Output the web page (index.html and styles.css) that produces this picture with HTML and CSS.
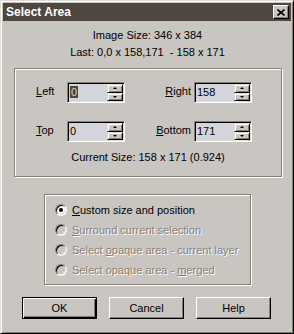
FILE: index.html
```html
<!DOCTYPE html>
<html lang="en">
<head>
  <meta charset="UTF-8">
  <title>Select Area</title>
  <link rel="stylesheet" href="styles.css">
</head>
<body>
  <div class="window">
    <div class="titlebar">
      <span class="title">Select Area</span>
      <button class="close">
        <svg width="8" height="7" viewBox="0 0 8 7"><path d="M0.5 0.5 L7.5 6.5 M7.5 0.5 L0.5 6.5" stroke="#000" stroke-width="1.6"/></svg>
      </button>
    </div>

    <div class="content">
      <p class="info">Image Size: 346 x 384</p>
      <p class="info info-last">Last: 0,0 x 158,171&nbsp; - 158 x 171</p>

      <div class="group coords">
        <div class="fields">
          <label class="lbl"><u>L</u>eft</label>
          <div class="spin">
            <span class="spin-value"><span class="sel">0</span></span>
            <span class="spin-btns"><span class="spin-btn up"><i></i></span><span class="spin-btn down"><i></i></span></span>
          </div>
          <label class="lbl lbl-right"><u>R</u>ight</label>
          <div class="spin">
            <span class="spin-value">158</span>
            <span class="spin-btns"><span class="spin-btn up"><i></i></span><span class="spin-btn down"><i></i></span></span>
          </div>

          <label class="lbl"><u>T</u>op</label>
          <div class="spin">
            <span class="spin-value">0</span>
            <span class="spin-btns"><span class="spin-btn up"><i></i></span><span class="spin-btn down"><i></i></span></span>
          </div>
          <label class="lbl lbl-right"><u>B</u>ottom</label>
          <div class="spin">
            <span class="spin-value">171</span>
            <span class="spin-btns"><span class="spin-btn up"><i></i></span><span class="spin-btn down"><i></i></span></span>
          </div>
        </div>
        <p class="info info-size">Current Size: 158 x 171 (0.924)</p>
      </div>

      <div class="group mode">
        <div class="radio"><span class="dot checked"></span><span><u>C</u>ustom size and position</span></div>
        <div class="radio disabled"><span class="dot"></span><span><u>S</u>urround current selection</span></div>
        <div class="radio disabled"><span class="dot"></span><span>Select <u>o</u>paque area - current layer</span></div>
        <div class="radio disabled"><span class="dot"></span><span>Select opaque area - <u>m</u>erged</span></div>
      </div>

      <div class="buttons">
        <button class="btn btn-default">OK</button>
        <button class="btn">Cancel</button>
        <button class="btn">Help</button>
      </div>
    </div>
  </div>
</body>
</html>
```

FILE: styles.css
```css
body {
  margin: 0;
  background-color: #c9c5c0;
  font-family: "Liberation Sans", Arial, sans-serif;
  font-size: 11px;
  color: #000;
}

.window {
  width: 294px;
  height: 334px;
  box-sizing: border-box;
  padding: 1px;
  background-color: #c9c5c0;
  border: 1px solid;
  border-color: #e0dcd7 #000 #000 #e0dcd7;
  box-shadow: inset 1px 1px #fff, inset -1px -1px #857f78;
}

.titlebar {
  height: 18px;
  margin: 1px 0 0 1px;
  width: 288px;
  background-color: #4f463f;
  display: flex;
  align-items: center;
  justify-content: space-between;
}

.title {
  color: #fff;
  font-weight: bold;
  font-size: 12px;
  padding-left: 3px;
}

.close {
  width: 16px;
  height: 14px;
  margin-right: 2px;
  padding: 0;
  display: flex;
  align-items: center;
  justify-content: center;
  background-color: #c9c5c0;
  border: 1px solid;
  border-color: #fff #000 #000 #fff;
  box-shadow: inset -1px -1px #857f78;
}

.content {
  padding-left: 1px;
}

.info {
  margin: 8px 0 0;
  line-height: 13px;
  text-align: center;
}

.info-last {
  margin-top: 4px;
}

.group {
  border: 1px solid #857f78;
  box-shadow: 1px 1px #fff, inset 1px 1px #fff;
}

.coords {
  margin: 9px 10px 0 11px;
  height: 109px;
  box-sizing: border-box;
  padding: 13px 0 0 21px;
}

.fields {
  display: grid;
  grid-template-columns: 31px 58px 69px 58px;
  grid-auto-rows: 21px;
  row-gap: 18px;
  align-items: center;
}

.lbl {
  line-height: 13px;
  padding-bottom: 2px;
}

.lbl-right {
  text-align: right;
  padding-right: 3px;
}

.spin {
  display: flex;
  height: 21px;
  box-sizing: border-box;
  padding: 1px;
  background-color: #d3d4dc;
  border: 1px solid;
  border-color: #857f78 #fff #fff #857f78;
  box-shadow: inset 1px 1px #000, inset -1px -1px #e0dcd7;
}

.spin-value {
  flex: 1;
  padding: 1px 0 0 1px;
  line-height: 15px;
}

.sel {
  background-color: #4f463f;
  color: #d3d4dc;
  padding: 0 1px;
}

.spin-btns {
  width: 16px;
  display: flex;
  flex-direction: column;
}

.spin-btn {
  flex: 1;
  display: flex;
  align-items: center;
  justify-content: center;
  background-color: #c9c5c0;
  border: 1px solid;
  border-color: #e0dcd7 #000 #000 #e0dcd7;
  box-shadow: inset 1px 1px #fff, inset -1px -1px #857f78;
}

.spin-btn i {
  width: 0;
  height: 0;
  border-left: 2px solid transparent;
  border-right: 2px solid transparent;
}

.up i {
  border-bottom: 2px solid #000;
}

.down i {
  border-top: 2px solid #000;
}

.info-size {
  margin: 9px 0 0 -21px;
}

.mode {
  margin: 17px 0 0 41px;
  width: 207px;
  height: 91px;
  box-sizing: border-box;
  padding: 5px 0 0 10px;
}

.radio {
  height: 20px;
  display: flex;
  align-items: center;
  gap: 5px;
}

.dot {
  width: 12px;
  height: 12px;
  box-sizing: border-box;
  border-radius: 50%;
  border: 1px solid;
  border-color: #857f78 #fff #fff #857f78;
  box-shadow: inset 1px 1px #000, inset -1px -1px #e0dcd7;
  background-color: #c9c5c0;
  display: flex;
  align-items: center;
  justify-content: center;
}

.dot.checked {
  background-color: #fff;
}

.dot.checked::after {
  content: "";
  width: 4px;
  height: 4px;
  border-radius: 50%;
  background-color: #000;
}

.disabled {
  color: #857f78;
  text-shadow: 1px 1px #fff;
}

.buttons {
  display: flex;
  gap: 12px;
  margin-top: 12px;
  padding-left: 19px;
}

.btn {
  width: 75px;
  height: 22px;
  padding: 0;
  font-family: inherit;
  font-size: 11px;
  background-color: #c9c5c0;
  border: 1px solid;
  border-color: #fff #000 #000 #fff;
  box-shadow: inset -1px -1px #857f78;
}

.btn-default {
  border-color: #000;
  box-shadow: inset 1px 1px #fff, inset -1px -1px #000, inset -2px -2px #857f78;
}
```
